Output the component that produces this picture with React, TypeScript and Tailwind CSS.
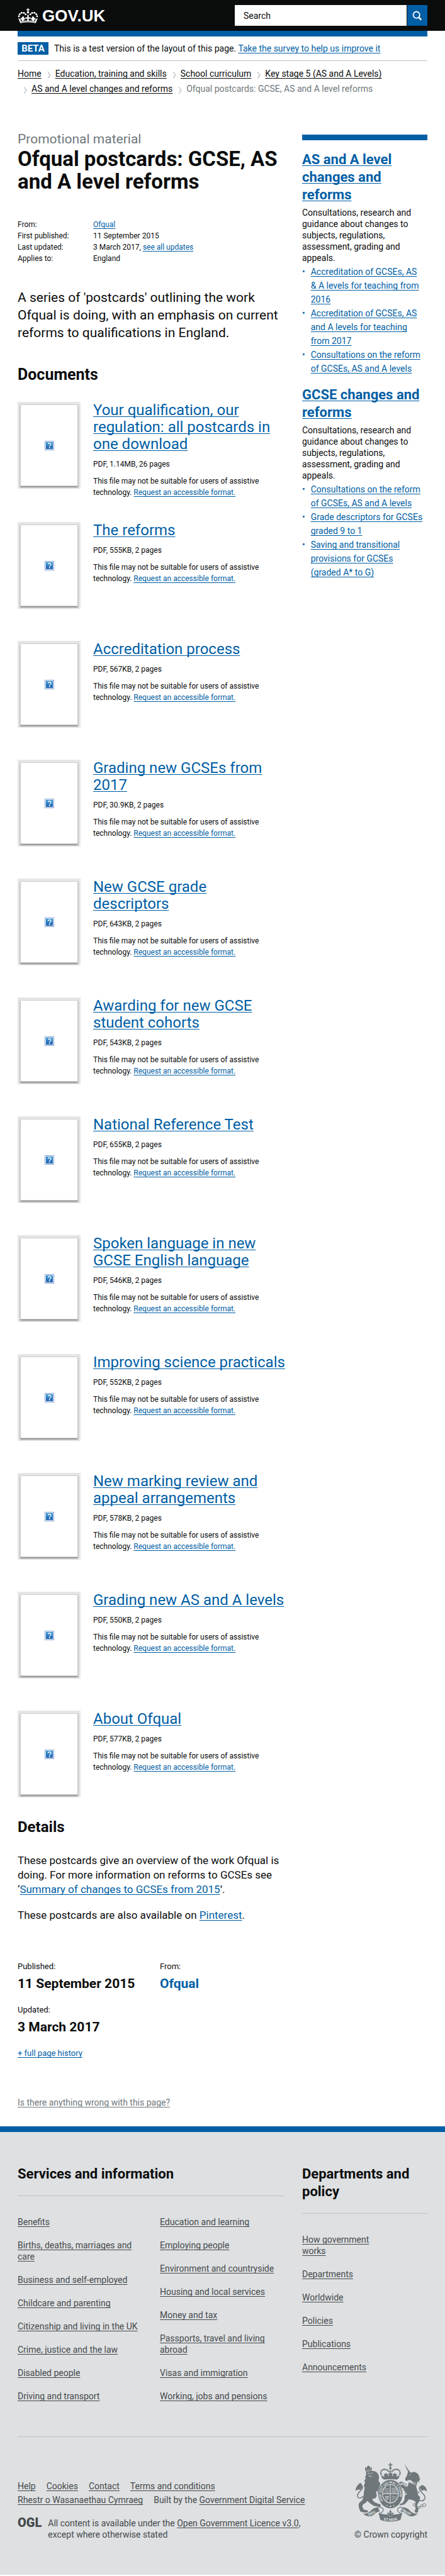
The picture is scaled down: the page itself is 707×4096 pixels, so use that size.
import type { ReactNode } from "react";

const linkBase = "underline decoration-1 underline-offset-2 [text-decoration-skip-ink:none]";

function BlueLink({ children }: { children: ReactNode }) {
  return (
    <a href="#" className={`${linkBase} text-[#005ea5]`}>
      {children}
    </a>
  );
}

function PlainLink({ children }: { children: ReactNode }) {
  return (
    <a href="#" className={linkBase}>
      {children}
    </a>
  );
}

const documents: [string, string][] = [
  ["Your qualification, our regulation: all postcards in one download", "1.14MB, 26 pages"],
  ["The reforms", "555KB, 2 pages"],
  ["Accreditation process", "567KB, 2 pages"],
  ["Grading new GCSEs from 2017", "30.9KB, 2 pages"],
  ["New GCSE grade\ndescriptors", "643KB, 2 pages"],
  ["Awarding for new GCSE student cohorts", "543KB, 2 pages"],
  ["National Reference Test", "655KB, 2 pages"],
  ["Spoken language in new GCSE English language", "546KB, 2 pages"],
  ["Improving science practicals", "552KB, 2 pages"],
  ["New marking review and appeal arrangements", "578KB, 2 pages"],
  ["Grading new AS and A levels", "550KB, 2 pages"],
  ["About Ofqual", "577KB, 2 pages"],
];

const related = [
  {
    title: "AS and A level changes and reforms",
    links: [
      "Accreditation of GCSEs, AS &\u00a0A levels for teaching from 2016",
      "Accreditation of GCSEs, AS and A levels for teaching from 2017",
      "Consultations on the reform of GCSEs, AS and A levels",
    ],
  },
  {
    title: "GCSE changes and reforms",
    links: [
      "Consultations on the reform of GCSEs, AS and A levels",
      "Grade descriptors for GCSEs graded 9 to 1",
      "Saving and transitional provisions for GCSEs (graded\u00a0A* to G)",
    ],
  },
];

const servicesA = [
  "Benefits",
  "Births, deaths, marriages and care",
  "Business and self-employed",
  "Childcare and parenting",
  "Citizenship and living in the UK",
  "Crime, justice and the law",
  "Disabled people",
  "Driving and transport",
];

const servicesB = [
  "Education and learning",
  "Employing people",
  "Environment and countryside",
  "Housing and local services",
  "Money and tax",
  "Passports, travel and living abroad",
  "Visas and immigration",
  "Working, jobs and pensions",
];

const departments = [
  "How government works",
  "Departments",
  "Worldwide",
  "Policies",
  "Publications",
  "Announcements",
];

function Crown() {
  const dots = [
    [97, 78], [101, 67], [111, 60], [123, 61], [132, 68],
    [192, 78], [188, 67], [178, 60], [166, 61], [157, 68],
  ];
  return (
    <svg viewBox="91 36 107 79" className="h-6 w-[33px]" fill="white" aria-hidden="true">
      <path d="M142 37h5v5h6v5h-6v6h-5v-6h-6v-5h6z" />
      <circle cx="144.5" cy="58" r="6" />
      {dots.map(([x, y]) => (
        <circle key={`${x}-${y}`} cx={x} cy={y} r="5" />
      ))}
      <path d="M144.5 68l5 9-3 5 8 3 3-4 1 12-7-3-4 2 2 10h-10l2-10-4-2-7 3 1-12 3 4 8-3-3-5z" />
      <path d="M120 78l5 7-2 4 6-1-1 9-5-2-2 9-9 1 0-10-6 0-1-8 6 2 1-5z" />
      <path d="M169 78l-5 7 2 4-6-1 1 9 5-2 2 9 9 1 0-10 6 0 1-8-6 2-1-5z" />
      <path d="M93 87l12 8 3 9 c24-5 49-5 73 0l3-9 12-8-11 27c-27-5-54-5-81 0z" />
      <path d="M108 108c24-4 49-4 73 0" fill="none" stroke="#0b0c0c" strokeWidth="2" />
    </svg>
  );
}

function SmallQuestion() {
  return (
    <svg viewBox="0 0 16 16" className="size-[15px]" aria-hidden="true">
      <defs>
        <linearGradient id="q" x1="0" y1="0" x2="0" y2="1">
          <stop offset="0" stopColor="#2f8fd0" />
          <stop offset="1" stopColor="#2263b0" />
        </linearGradient>
      </defs>
      <rect x=".5" y=".5" width="15" height="15" fill="white" stroke="#7f9fd0" />
      <rect x="2" y="2" width="12" height="12" fill="url(#q)" />
      <path d="M5.7 6.2c0-3 5-3 5 0 0 1.600-2.500 1.500-2.500 3.200" fill="none" stroke="white" strokeWidth="1.500" />
      <rect x="7.200" y="10.400" width="1.900" height="1.900" fill="white" />
    </svg>
  );
}

function RoyalArms() {
  const arch = [
    [173, 134], [172, 125], [175, 116], [182, 110], [190, 108], [199, 109], [207, 113], [214, 119],
    [271, 134], [272, 125], [269, 116], [262, 110], [254, 108], [245, 109], [237, 113], [230, 119],
  ];
  return (
    <svg viewBox="38 74 376 308" className="h-[94px] w-[115px]" fill="#6f777b" role="img" aria-label="Royal arms">
      <g>
        <path d="M219 75h6v7h7v6h-7v8h-6v-8h-7v-6h7z" />
        <circle cx="222" cy="102" r="6" />
        <path d="M220 104h4v28h-4z" />
        {arch.map(([x, y]) => (
          <circle key={`${x}-${y}`} cx={x} cy={y} r="4.200" />
        ))}
        <path d="M178 138l7 8c20-5 54-5 74 0l7-8 4 8-10 14c-24-6-52-6-76 0l-10-14z" />
        <path d="M199 124l4 9 7-2-2 14h-18l-2-14 7 2zM245 124l4 9 7-2-2 14h-18l-2-14 7 2zM222 120l5 10 6-2-3 16h-16l-3-16 6 2z" />
      </g>

      <g>
        <path d="M91 96l6 6 5-10 6-3 6 3 4 10 8-5-2 18-30 5-4-12z" />
        <path d="M96 113l28-4" stroke="#dee0e2" strokeWidth="2" />
        <path d="M94 122L124 115 144 119 158 131 163 149 160 168 169 182 166 205 175 225 172 240 158 236 153 220 147 226 151 244 145 258 127 262 135 276 149 284 168 290 174 298 164 304 134 298 114 284 102 272 92 284 78 292 76 304 84 318 104 322 106 330 88 334 66 328 60 314 56 296 60 282 76 268 82 250 84 226 88 206 84 190 90 178 86 166 94 156 90 146 96 138z" />
        <path d="M103 130l10-3 4 4M122 130l9-4M108 138l8 3-6 6M116 146l12-3" fill="none" stroke="#dee0e2" strokeWidth="2.500" />
        <path d="M82 248c-24 20-40 4-26-16s30-26 18-38" fill="none" stroke="#6f777b" strokeWidth="5" />
        <path d="M75 192l-6-13-10 3-13 16-7 22 14-6 14 0 6-8z" />
      </g>

      <g>
        <path d="M295 81l31 44-8 5z" />
        <path d="M304 100l7-3M310 110l7-4" stroke="#dee0e2" strokeWidth="1" />
        <path d="M312 126l8-8 8 8 18-5 16 8 9 12 2 12 5 7-6 3 1 12-10-4-4 18-14-2-8-12-8-10-10-2-10 5-9-2-1-10 8-14z" />
        <circle cx="325" cy="136" r="2.500" fill="#dee0e2" />
        <path d="M318 172l40 17-2 9 6 22 4 22 10 10-2 20-10 16-4 12 8 12-3 20-12 3-6-12 8-10-4-18 2-18-16-10-20-2-10 14-12 12-26 6 4-9 14-6 8-16 2-22 12-8-8-16-10-10-14-8-10-2 4-10 14-4 14 10 12 4 4-14z" />
        <path d="M318 165l38 16M314 174l42 17" fill="none" stroke="#dee0e2" strokeWidth="2" />
        <path d="M318 170l5 6 5-3 4 7 5-4 5 7 5-4 5 6" fill="none" stroke="#dee0e2" strokeWidth="2" />
        <path d="M276 184l-6-6 8-3 14 8M290 214l8 4 6 18" fill="none" stroke="#6f777b" strokeWidth="6" />
        <path d="M374 270c24 8 36-14 22-30s-32-26-20-42" fill="none" stroke="#6f777b" strokeWidth="5" />
        <path d="M374 204l6-12 12-2 14 12 7 20-16-6-12 4z" />
        <g fill="none" stroke="#6f777b" strokeWidth="3">
          <circle cx="301" cy="187" r="5" />
          <circle cx="311" cy="202" r="5" />
          <circle cx="366" cy="228" r="5" />
          <circle cx="366" cy="256" r="6" />
          <circle cx="346" cy="292" r="6" />
          <circle cx="357" cy="305" r="6" />
          <circle cx="372" cy="306" r="6" />
          <circle cx="385" cy="298" r="6" />
          <circle cx="398" cy="294" r="8" />
        </g>
      </g>

      <ellipse cx="222" cy="237" rx="64" ry="75" stroke="#dee0e2" strokeWidth="2" />
      <ellipse cx="222" cy="235" rx="43" ry="50" fill="#dee0e2" />
      <ellipse cx="222" cy="235" rx="39" ry="46" />
      <path d="M222 189v92M183 235h78" stroke="#dee0e2" strokeWidth="5" />
      <path d="M222 189v92M183 235h78" stroke="#6f777b" strokeWidth="1.500" />
      <g fill="none" stroke="#dee0e2" strokeWidth="2.500">
        <path d="M192 209q6-6 12 0t12-1M190 218q6-6 13 0t13-1M190 227q6-5 13 0t13-1" />
        <path d="M230 250q6-6 12 0t12-1M230 259q6-6 12 0t9-1M230 268q5-5 10 0" />
        <path d="M231 206l18 0 6 12-6 10-18-2zM238 224v-12l10 4-4 10" />
        <path d="M193 249h18c0 12-5 20-11 24M198 249v18M204 249v16M210 249v10" />
      </g>
      <path id="garter" d="M186 275A48 56 0 1 1 258 275" fill="none" />
      <text fontFamily="Roboto, sans-serif" fontSize="16" fontWeight="700" fill="#dee0e2">
        <textPath href="#garter" startOffset="4">HONI SOIT QUI MAL Y PENSE</textPath>
      </text>
      <g fill="#dee0e2">
        <circle cx="222" cy="301" r="4" />
        <circle cx="204" cy="297" r="3" />
        <circle cx="240" cy="297" r="3" />
      </g>
      <path d="M186 154c24-5 48-5 72 0l-3 8c-22-4-44-4-66 0z" />

      <g>
        <path d="M78 338c18 4 34-4 46-18 8-8 20-14 34-14l8 22c-12 0-20 8-30 16-16 12-36 14-58-6z" />
        <path d="M366 338c-18 4-34-4-46-18-8-8-20-14-34-14l-12 22c12 0 24 8 34 16 16 12 36 14 58-6z" />
        <path d="M160 306c16-2 28 6 24 18-3 8-14 14-20 14M284 306c-16-2-28 6-24 18 3 8 14 14 20 14" fill="none" stroke="#6f777b" strokeWidth="4" />
        <path d="M160 334c20 14 104 14 124 0l-9 36c-22 14-84 14-106 0z" />
        <path d="M222 318l7 12-4 8 12-6 2 10-12 4 2 8h-14l2-8-12-4 2-10 12 6-4-8z" stroke="#dee0e2" strokeWidth="1" />
        <path id="motto-left" d="M109 351q26-8 56-33" fill="none" />
        <path id="motto-right" d="M281 322q30 28 62 31" fill="none" />
        <path id="motto-mid" d="M176 371q46 12 92 0" fill="none" />
      </g>
      <g fontFamily="Roboto, sans-serif" fontSize="19" fontWeight="700" fill="#dee0e2">
        <text><textPath href="#motto-left">DIEU</textPath></text>
        <text><textPath href="#motto-mid" startOffset="12">ET MON</textPath></text>
        <text><textPath href="#motto-right">DROIT</textPath></text>
      </g>
    </svg>
  );
}

function Crumb({ children }: { children: ReactNode }) {
  return (
    <li className="ml-[9px] flex items-center gap-[7px]">
      <svg viewBox="0 0 6 12" className="mt-1 h-[11px] w-[6px]" fill="none" stroke="#bfc1c3" strokeWidth="1.500" aria-hidden="true">
        <path d="M1 .5l4 5.500-4 5.500" />
      </svg>
      {children}
    </li>
  );
}

function LinkList({ items }: { items: string[] }) {
  return (
    <ul className="flex flex-col gap-[19px]">
      {items.map((t) => (
        <li key={t}>
          <PlainLink>{t}</PlainLink>
        </li>
      ))}
    </ul>
  );
}

export default function App() {
  return (
    <div className="bg-white font-['Roboto','Liberation_Sans',sans-serif] text-sm text-[#0b0c0c]">
      <header className="bg-[#0b0c0c]">
        <div className="flex h-[49px] items-center justify-between px-7">
          <a href="#" className="flex items-center gap-[6px] text-white">
            <Crown />
            <span className="font-['Liberation_Sans',sans-serif] text-[26px] leading-[30px] font-bold">GOV.UK</span>
          </a>
          <form className="flex h-[33px] w-[306px] gap-px" onSubmit={(e) => e.preventDefault()}>
            <input
              type="text"
              aria-label="Search"
              placeholder="Search"
              className="min-w-0 flex-1 bg-white px-[14px] text-sm placeholder:text-[#0b0c0c] placeholder:opacity-100"
            />
            <button type="submit" aria-label="Submit search" className="flex w-8 items-center justify-center bg-[#005ea5]">
              <svg viewBox="0 0 18 18" className="size-4" fill="none" stroke="white" aria-hidden="true">
                <circle cx="7.500" cy="7.500" r="5.800" strokeWidth="2" />
                <path d="M11.500 12l4.500 4.500" strokeWidth="2.800" />
              </svg>
            </button>
          </form>
        </div>
      </header>

      <div className="px-7">
        <div className="h-[9px] bg-[#005ea5]" />
        <div className="flex items-center gap-[9px] border-b border-[#bfc1c3] py-[9px]">
          <strong className="flex h-5 w-[49px] items-center justify-center bg-[#005ea5] text-[15px] leading-5 font-bold text-white">BETA</strong>
          <p className="leading-5">
            This is a test version of the layout of this page. <BlueLink>Take the survey to help us improve it</BlueLink>
          </p>
        </div>

        <nav aria-label="Breadcrumb" className="mt-2">
          <ol className="flex flex-wrap leading-6">
            <li>
              <PlainLink>Home</PlainLink>
            </li>
            <Crumb><PlainLink>Education, training and skills</PlainLink></Crumb>
            <Crumb><PlainLink>School curriculum</PlainLink></Crumb>
            <Crumb><PlainLink>Key stage 5 (AS and A Levels)</PlainLink></Crumb>
            <Crumb><PlainLink>AS and A level changes and reforms</PlainLink></Crumb>
            <Crumb><span className="text-[#6f777b]">Ofqual postcards: GCSE, AS and A level reforms</span></Crumb>
          </ol>
        </nav>

        <div className="mt-[54px] grid grid-cols-[minmax(0,1fr)_199px] gap-7">
          <main>
            <p className="text-[21px] leading-7 text-[#6f777b]">Promotional material</p>
            <h1 className="text-[33px] leading-9 font-bold">Ofqual postcards: GCSE, AS and A level reforms</h1>

            <dl className="mt-[41px] grid grid-cols-[120px_1fr] text-xs leading-[18px]">
              <dt>From:</dt>
              <dd><BlueLink>Ofqual</BlueLink></dd>
              <dt>First published:</dt>
              <dd>11 September 2015</dd>
              <dt>Last updated:</dt>
              <dd>3 March 2017, <BlueLink>see all updates</BlueLink></dd>
              <dt>Applies to:</dt>
              <dd>England</dd>
            </dl>

            <p className="mt-[39px] text-[21px] leading-7">
              A series of 'postcards' outlining the work Ofqual is doing, with an emphasis on current reforms to qualifications in England.
            </p>

            <h2 className="mt-[39px] text-[25px] leading-7 font-bold">Documents</h2>
            <ul className="mt-[29px]">
              {documents.map(([title, info]) => (
                <li key={title} className="flex min-h-[189px] items-start gap-5 pb-[38px] last:min-h-0 last:pb-0">
                  <div className="h-[138px] w-[100px] shrink-0 bg-[#e6e6e6] p-1">
                    <div className="flex h-full items-center justify-center border border-[#cccccc] bg-white shadow-[0_2px_2px_rgba(11,12,12,0.4)]">
                      <SmallQuestion />
                    </div>
                  </div>
                  <div className="-mr-4 min-w-0 flex-1 text-xs leading-[18px]">
                    <h3 className="text-2xl leading-[27px] whitespace-pre-line">
                      <BlueLink>{title}</BlueLink>
                    </h3>
                    <p className="mt-[9px]">PDF, {info}</p>
                    <p className="mt-[9px] pr-4">
                      This file may not be suitable for users of assistive technology. <BlueLink>Request an accessible format.</BlueLink>
                    </p>
                  </div>
                </li>
              ))}
            </ul>

            <h2 className="mt-[33px] text-2xl leading-7 font-bold">Details</h2>
            <div className="mt-7 flex flex-col gap-[18px] text-[17px] leading-[23px]">
              <p>
                These postcards give an overview of the work Ofqual is doing. For more information on reforms to GCSEs see ‘<BlueLink>Summary of changes to GCSEs from 2015</BlueLink>’.
              </p>
              <p>
                These postcards are also available on <BlueLink>Pinterest</BlueLink>.
              </p>
            </div>

            <dl className="mt-[61px] grid grid-cols-2 gap-x-7 gap-y-[21px] text-[13px] leading-[18px]">
              <div>
                <dt>Published:</dt>
                <dd className="mt-[6px] text-[21px] leading-6 font-bold">11 September 2015</dd>
              </div>
              <div>
                <dt>From:</dt>
                <dd className="mt-[6px] text-[21px] leading-6 font-bold">
                  <a href="#" className="text-[#005ea5]">Ofqual</a>
                </dd>
              </div>
              <div>
                <dt>Updated:</dt>
                <dd className="mt-[6px] text-[21px] leading-6 font-bold">3 March 2017</dd>
              </div>
            </dl>
            <p className="mt-[21px] text-[13px] leading-[18px]">
              <BlueLink>+ full page history</BlueLink>
            </p>
          </main>

          <aside className="mt-[7px]">
            <div className="h-[9px] bg-[#005ea5]" />
            <div className="mt-[17px] flex flex-col gap-[17px]">
              {related.map((group) => (
                <section key={group.title}>
                  <h2 className="text-[22px] leading-7 font-bold">
                    <BlueLink>{group.title}</BlueLink>
                  </h2>
                  <p className="mt-[5px] leading-[18px]">
                    Consultations, research and guidance about changes to subjects, regulations, assessment, grading and appeals.
                  </p>
                  <ul className="mt-[2px] list-none leading-[22px] text-[#005ea5]">
                    {group.links.map((t) => (
                      <li key={t} className="flex gap-[9px]">
                        <span aria-hidden="true">•</span>
                        <span>
                          <BlueLink>{t}</BlueLink>
                        </span>
                      </li>
                    ))}
                  </ul>
                </section>
              ))}
            </div>
          </aside>
        </div>

        <p className="mt-[60px] leading-[18px] text-[#6f777b]">
          <PlainLink>Is there anything wrong with this page?</PlainLink>
        </p>
      </div>

      <footer className="mt-[29px] border-t-[9px] border-[#005ea5] bg-[#dee0e2] px-7 pt-[53px] pb-[55px] leading-[18px] text-[#454a4c]">
        <div className="grid grid-cols-[minmax(0,1fr)_199px] gap-7">
          <section>
            <h2 className="border-b border-[#bfc1c3] pb-5 text-[22px] leading-7 font-bold text-[#0b0c0c]">Services and information</h2>
            <div className="mt-8 grid grid-cols-2 gap-7">
              <LinkList items={servicesA} />
              <LinkList items={servicesB} />
            </div>
          </section>
          <section>
            <h2 className="border-b border-[#bfc1c3] pb-5 text-[22px] leading-7 font-bold text-[#0b0c0c]">Departments and policy</h2>
            <div className="mt-8 pr-16">
              <LinkList items={departments} />
            </div>
          </section>
        </div>

        <div className="mt-[55px] flex items-end justify-between border-t border-[#bfc1c3] pt-[41px]">
          <div>
            <ul className="flex max-w-[480px] flex-wrap gap-x-[17px] leading-[22px]">
              <li><PlainLink>Help</PlainLink></li>
              <li><PlainLink>Cookies</PlainLink></li>
              <li><PlainLink>Contact</PlainLink></li>
              <li><PlainLink>Terms and conditions</PlainLink></li>
              <li><PlainLink>Rhestr o Wasanaethau Cymraeg</PlainLink></li>
              <li>Built by the <PlainLink>Government Digital Service</PlainLink></li>
            </ul>
            <div className="mt-[17px] flex gap-[10px]">
              <span className="text-[20px] leading-4 font-black">OGL</span>
              <p className="max-w-[430px]">
                All content is available under the <PlainLink>Open Government Licence v3.0</PlainLink>, except where otherwise stated
              </p>
            </div>
          </div>
          <div className="flex flex-col items-end gap-[11px]">
            <RoyalArms />
            <a href="#">© Crown copyright</a>
          </div>
        </div>
      </footer>
    </div>
  );
}
